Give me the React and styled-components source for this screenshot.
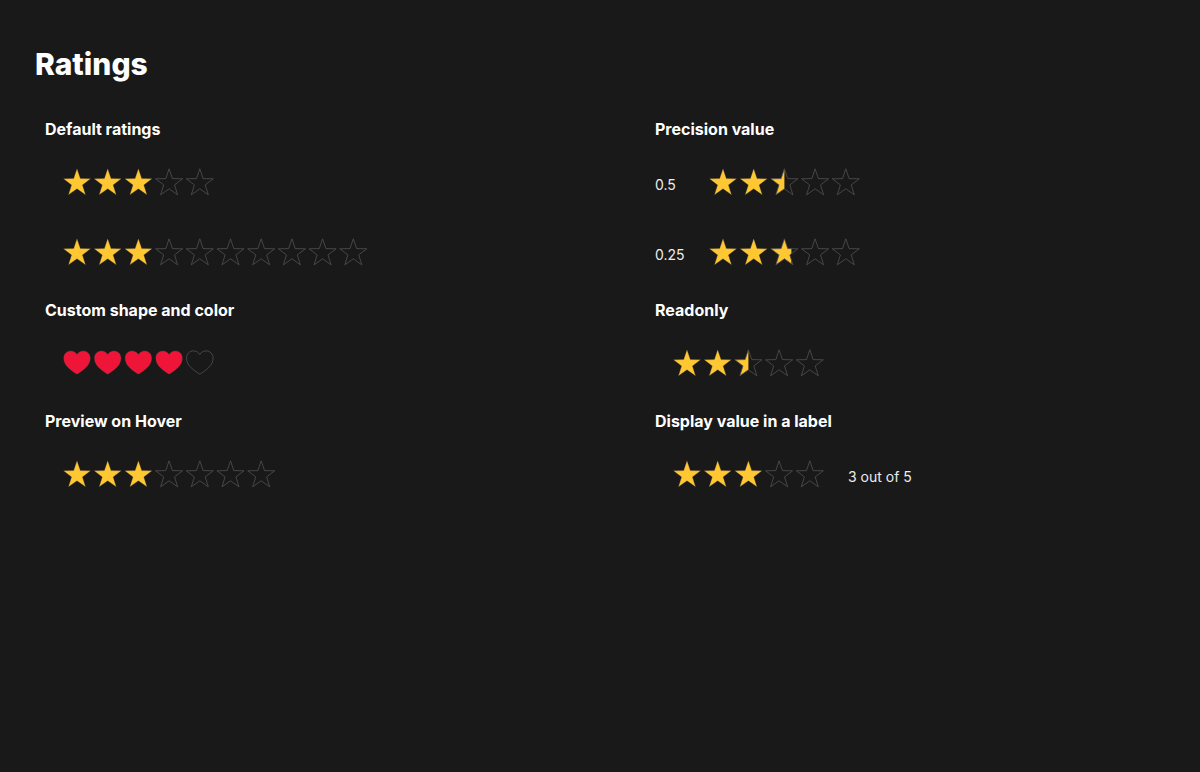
import React, { useId, useState } from 'react';
import styled, { createGlobalStyle } from 'styled-components';

const PITCH = 30.7;
const SIZE = 28;

const shapes = {
  star: 'M14 0.8 L17.3 10.6 L27.5 10.8 L19.4 16.9 L22.5 26.8 L14 20.8 L5.5 26.8 L8.6 16.9 L0.5 10.8 L10.7 10.6 Z',
  heart:
    'M14 25.1 C13 24.5 8.6 22 5 18.4 C2.4 15.7 0.7 12.8 0.7 9.2 C0.7 4.9 3.8 1.9 7.6 1.9 C10.4 1.9 12.6 3.2 14 5.6 C15.4 3.2 17.6 1.9 20.4 1.9 C24.2 1.9 27.3 4.9 27.3 9.2 C27.3 12.8 25.6 15.7 23 18.4 C19.4 22 15 24.5 14 25.1 Z',
};

function Rating({ label, initial, max = 5, step = 1, shape = 'star', color = '#ffc832', disabled, onChange }) {
  const [value, setValue] = useState(initial);
  const clipId = useId();
  const width = Math.round(max * PITCH);
  const items = Array.from({ length: max }, (_, i) => i);
  const full = Math.floor(value);
  const filledWidth = full * PITCH + (value - full) * SIZE;

  const handleChange = (event) => {
    const next = Number(event.target.value);
    setValue(next);
    if (onChange) onChange(next);
  };

  return (
    <RatingBox>
      <svg width={width} height={SIZE} viewBox={`0 0 ${width} ${SIZE}`} aria-hidden="true">
        <clipPath id={clipId}>
          <rect x="0" y="0" width={filledWidth} height={SIZE} />
        </clipPath>
        <g clipPath={`url(#${clipId})`}>
          {items.map((i) => (
            <path key={i} d={shapes[shape]} fill={color} transform={`translate(${i * PITCH} 0)`} />
          ))}
        </g>
        {items.map((i) => (
          <Outline key={i} $filled={i < full} d={shapes[shape]} transform={`translate(${i * PITCH} 0)`} />
        ))}
      </svg>
      <RatingInput
        type="range"
        aria-label={label}
        min="0"
        max={max}
        step={step}
        value={value}
        disabled={disabled}
        onChange={handleChange}
      />
    </RatingBox>
  );
}

function App() {
  const [labelValue, setLabelValue] = useState(3);

  return (
    <>
      <GlobalStyle />
      <Page>
        <Title>Ratings</Title>
        <Samples>
          <Sample>
            <SampleTitle>Default ratings</SampleTitle>
            <Row $indent>
              <Rating label="Default rating" initial={3} />
            </Row>
            <Row $indent>
              <Rating label="Default rating out of ten" initial={3} max={10} />
            </Row>
          </Sample>
          <Sample>
            <SampleTitle>Precision value</SampleTitle>
            <Row>
              <PrecisionLabel>0.5</PrecisionLabel>
              <Rating label="Precision 0.5" initial={2.5} step={0.5} />
            </Row>
            <Row>
              <PrecisionLabel>0.25</PrecisionLabel>
              <Rating label="Precision 0.25" initial={2.75} step={0.25} />
            </Row>
          </Sample>
          <Sample>
            <SampleTitle>Custom shape and color</SampleTitle>
            <Row $indent>
              <Rating label="Custom shape and color" initial={4} shape="heart" color="#ee1538" />
            </Row>
          </Sample>
          <Sample>
            <SampleTitle>Readonly</SampleTitle>
            <Row $indent>
              <Rating label="Readonly" initial={2.5} step={0.5} disabled />
            </Row>
          </Sample>
          <Sample>
            <SampleTitle>Preview on Hover</SampleTitle>
            <Row $indent>
              <Rating label="Preview on Hover" initial={3} max={7} />
            </Row>
          </Sample>
          <Sample>
            <SampleTitle>Display value in a label</SampleTitle>
            <Row $indent>
              <Rating label="Display value in a label" initial={3} onChange={setLabelValue} />
              <ValueLabel>{labelValue} out of 5</ValueLabel>
            </Row>
          </Sample>
        </Samples>
      </Page>
    </>
  );
}

const GlobalStyle = createGlobalStyle`
  body {
    margin: 0;
    background-color: #191919;
    color: #fff;
    font-family: Inter, sans-serif;
  }
`;

const Page = styled.main`
  padding: 44px 0 32px 35px;
`;

const Title = styled.h1`
  margin: 0 0 33px;
  font-size: 30px;
  font-weight: 800;
  line-height: 40px;
`;

const Samples = styled.div`
  display: grid;
  grid-template-columns: 610fr 545fr;
  row-gap: 32px;
  padding-left: 10px;
`;

const Sample = styled.section`
  min-width: 0;
`;

const SampleTitle = styled.h2`
  margin: 0 0 27px;
  font-size: 16px;
  font-weight: 700;
  line-height: 24px;
`;

const Row = styled.div`
  display: flex;
  align-items: center;
  height: 28px;
  padding-left: ${(props) => (props.$indent ? '18px' : '0')};

  & + & {
    margin-top: 42px;
  }
`;

const RatingBox = styled.div`
  position: relative;
  flex: none;

  svg {
    display: block;
  }
`;

const Outline = styled.path`
  fill: none;
  stroke: ${(props) => (props.$filled ? 'rgba(90, 80, 70, 0.35)' : '#525252')};
  stroke-width: 0.8;
`;

const RatingInput = styled.input`
  position: absolute;
  inset: 0;
  width: 100%;
  height: 100%;
  margin: 0;
  opacity: 0;
  cursor: pointer;

  &:disabled {
    cursor: default;
  }
`;

const TextLabel = styled.span`
  padding-top: 5px;
  color: #ececec;
  font-size: 14px;
  line-height: 20px;
`;

const PrecisionLabel = styled(TextLabel)`
  width: 54px;
`;

const ValueLabel = styled(TextLabel)`
  margin-left: 21px;
`;

export default App;
